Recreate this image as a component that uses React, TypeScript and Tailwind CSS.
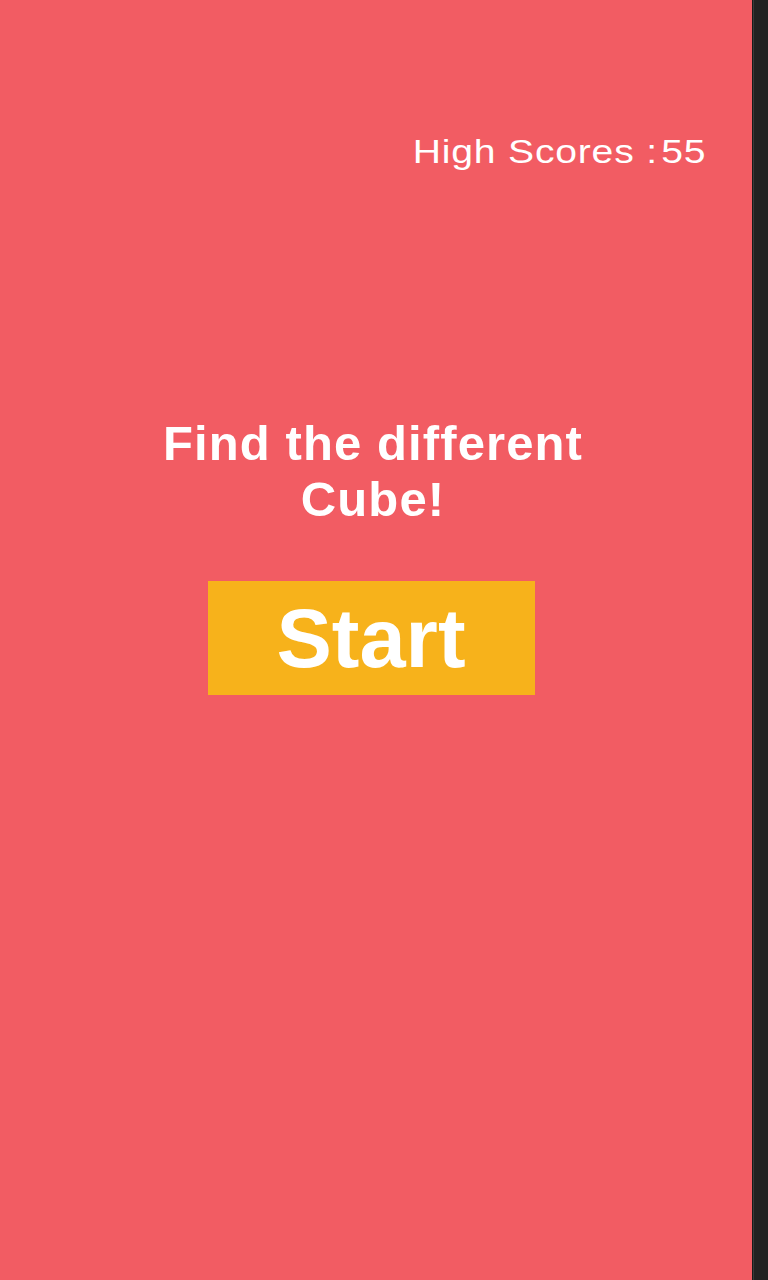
import React from "react";

export default function App() {
  return (
    <div className="flex h-screen w-full" style={{ fontFamily: '"Liberation Sans", Arial, sans-serif' }}>
      <div className="flex-1 bg-[#f25c63] flex flex-col">
        <div className="flex justify-end pr-[46px] pt-[134px]">
          <span className="text-white text-[34px] leading-[34px] tracking-[0.7px] scale-x-[1.15] origin-right inline-block whitespace-nowrap">
            High Scores :<span className="ml-[3px]">55</span>
          </span>
        </div>
        <div className="flex flex-col items-center pt-[247px]">
          <h1 className="text-white font-bold text-[49px] leading-[56px] text-center tracking-[1.1px] w-[460px] mr-[6px]">
            Find the different Cube!
          </h1>
          <button className="mt-[54px] mr-[10px] w-[327px] h-[114px] bg-[#f7b21b] flex items-center justify-center text-white font-bold text-[83px] leading-[83px]">
            Start
          </button>
        </div>
      </div>
      <div className="w-[16px] h-full flex">
        <div className="w-px bg-[#1a1a1a]" />
        <div className="w-px bg-[#3a3a3a]" />
        <div className="flex-1 bg-[#222222]" />
      </div>
    </div>
  );
}
